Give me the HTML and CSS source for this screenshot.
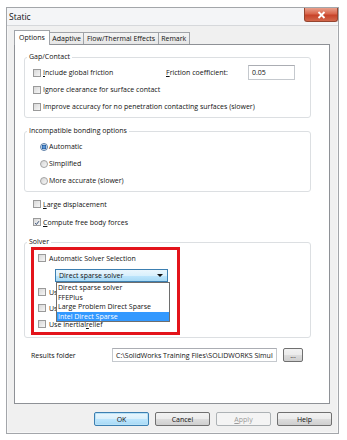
FILE: index.html
```html
<!DOCTYPE html>
<html lang="en">

<head>
    <meta charset="UTF-8" />
    <title>Static</title>
    <link rel="stylesheet" href="styles.css">
</head>

<body>
    <div class="window">
        <div class="titlebar">
            <span class="title">Static</span>
            <div class="close">
                <svg width="9" height="8" viewBox="0 0 9 8">
                    <path d="M1.5 1 L7.5 7 M7.5 1 L1.5 7" stroke="#fff" stroke-width="1.8" />
                </svg>
            </div>
        </div>

        <div class="body">
            <div class="tabs">
                <div class="tab active">Options</div>
                <div class="tab">Adaptive</div>
                <div class="tab">Flow/Thermal Effects</div>
                <div class="tab">Remark</div>
            </div>

            <div class="panel">
                <fieldset class="group gap">
                    <legend>Gap/Contact</legend>
                    <div class="row">
                        <span class="opt friction"><span class="check"></span><u>I</u>nclude global friction</span>
                        <span class="coef-label"><u>F</u>riction coefficient:</span>
                        <span class="textbox coef">0.05</span>
                    </div>
                    <div class="row">
                        <span class="opt"><span class="check"></span>I<u>g</u>nore clearance for surface contact</span>
                    </div>
                    <div class="row">
                        <span class="opt"><span class="check"></span>Improve accuracy for no penetration contacting surfaces (slower)</span>
                    </div>
                </fieldset>

                <fieldset class="group bonding">
                    <legend>Incompatible bonding options</legend>
                    <div class="row">
                        <span class="opt"><span class="radio selected"></span>Automatic</span>
                    </div>
                    <div class="row">
                        <span class="opt"><span class="radio"></span>Simplified</span>
                    </div>
                    <div class="row">
                        <span class="opt"><span class="radio"></span>More accurate (slower)</span>
                    </div>
                </fieldset>

                <div class="loose">
                    <div class="row tall">
                        <span class="opt"><span class="check"></span><u>L</u>arge displacement</span>
                    </div>
                    <div class="row tall">
                        <span class="opt">
                            <span class="check">
                                <svg width="8" height="8" viewBox="0 0 8 8">
                                    <polyline points="1.6,4.2 3.2,6 6.6,1.6" fill="none" stroke="#26416b" stroke-width="1.2" />
                                </svg>
                            </span><u>C</u>ompute free body forces
                        </span>
                    </div>
                </div>

                <fieldset class="group solver">
                    <legend>Solver</legend>
                    <div class="redbox">
                        <div class="srow">
                            <span class="opt"><span class="check"></span>Automatic Solver Selection</span>
                        </div>
                        <div class="combo">
                            <div class="combo-face">
                                <span>Direct sparse solver</span>
                                <span class="arrow"></span>
                            </div>
                            <div class="droplist">
                                <div class="item">Direct sparse solver</div>
                                <div class="item">FFEPlus</div>
                                <div class="item">Large Problem Direct Sparse</div>
                                <div class="item picked">Intel Direct Sparse</div>
                            </div>
                        </div>
                        <div class="srow first-use">
                            <span class="opt"><span class="check"></span>Use inplane effect</span>
                        </div>
                        <div class="srow">
                            <span class="opt"><span class="check"></span>Use soft spring to stabilize model</span>
                        </div>
                        <div class="srow">
                            <span class="opt"><span class="check"></span>Use inertial <u>r</u>elief</span>
                        </div>
                    </div>
                </fieldset>

                <div class="results">
                    <span class="results-label">Results folder</span>
                    <span class="textbox path">C:\SolidWorks Training Files\SOLIDWORKS Simul</span>
                    <span class="btn browse">...</span>
                </div>
            </div>

            <div class="buttons">
                <span class="btn default">OK</span>
                <span class="btn">Cancel</span>
                <span class="btn disabled"><u>A</u>pply</span>
                <span class="btn">Help</span>
            </div>
        </div>
    </div>
</body>

</html>
```

FILE: styles.css
```css
body {
    margin: 0;
    background: #ffffff;
    font-family: 'Open Sans', 'Noto Sans', sans-serif;
    font-size: 7px;
    color: #111;
}

u {
    text-decoration-thickness: 1px;
    text-underline-offset: 1px;
}

.window {
    margin: 7px 0 0 6px;
    width: 333px;
    height: 427px;
    box-sizing: border-box;
    border: 1px solid #a3a6aa;
    box-shadow: inset 0 0 0 1px #f7f7f7;
    background: #f0f0f0;
}

.titlebar {
    height: 17px;
    display: flex;
    justify-content: space-between;
    align-items: center;
    padding-left: 2px;
    background: #f4f5f7;
    border-bottom: 1px solid #d6d8db;
}

.title {
    font-size: 8.5px;
    color: #111;
}

.close {
    align-self: flex-start;
    width: 34px;
    height: 14px;
    box-sizing: border-box;
    border: 1px solid #95452f;
    border-top: none;
    border-radius: 0 0 3px 3px;
    background: linear-gradient(#e9a08c, #d9664c 45%, #c7432a 55%, #d2674b);
    display: flex;
    align-items: center;
    justify-content: center;
}

.body {
    padding: 4px 8px 0 7px;
}

/* tabs */
.tabs {
    display: flex;
    align-items: flex-end;
    height: 14px;
}

.tab {
    height: 12px;
    box-sizing: border-box;
    padding: 0 2.5px;
    margin-right: -1px;
    border: 1px solid #a0a3a8;
    border-bottom: none;
    background: linear-gradient(#f4f4f4, #e6e6e6);
    line-height: 11px;
}

.tab.active {
    height: 15px;
    margin-bottom: -1px;
    padding: 1px 4px 0;
    background: #ffffff;
    position: relative;
    z-index: 1;
}

.panel {
    height: 360px;
    box-sizing: border-box;
    border: 1px solid #8e9196;
    background: #ffffff;
    padding-top: 7px;
}

/* group boxes */
.group {
    margin: 0 18px 0 9px;
    padding: 2px 0 2px 2px;
    border: 1px solid #dcdfe2;
    border-radius: 3px;
    min-width: 0;
}

.group legend {
    padding: 0 2px;
    line-height: 10px;
}

.bonding {
    margin-top: 8px;
}

.solver {
    margin-top: 6px;
    padding-top: 0;
}

.row {
    height: 17px;
    display: flex;
    align-items: center;
    padding-left: 6px;
}

.bonding .row {
    padding-left: 13px;
}

.loose {
    margin-top: 3px;
}

.row.tall {
    height: 18px;
    padding-left: 18px;
}

.opt {
    display: flex;
    align-items: center;
    white-space: nowrap;
}

.friction {
    width: 133px;
}

.coef-label {
    width: 82px;
}

.check {
    width: 8px;
    height: 8px;
    box-sizing: border-box;
    margin-right: 2px;
    border: 1px solid #9a9a9a;
    background: linear-gradient(135deg, #d8d8d8, #f6f6f6);
    display: flex;
}

.radio {
    width: 8px;
    height: 8px;
    box-sizing: border-box;
    margin-right: 1px;
    border: 1px solid #a2a2a2;
    border-radius: 50%;
    background: linear-gradient(135deg, #d6d6d6, #f8f8f8);
}

.radio.selected {
    border-color: #5c7ea6;
    background: radial-gradient(circle, #7cb4ee 0, #1f5a9e 2.2px, #e4eef8 2.6px);
}

.textbox {
    height: 15px;
    box-sizing: border-box;
    border: 1px solid #c5c9ce;
    border-top-color: #abadb3;
    padding: 2px 3px 0;
    background: #ffffff;
    white-space: nowrap;
    overflow: hidden;
}

.coef {
    width: 47px;
}

/* solver area */
.redbox {
    margin-left: 4px;
    width: 149px;
    box-sizing: border-box;
    border: 3px solid #e3141b;
    padding-left: 4px;
}

.srow {
    height: 16px;
    display: flex;
    align-items: center;
}

.srow .check {
    margin-right: 3px;
}

.first-use {
    margin-top: 2px;
}

.combo {
    position: relative;
    margin: 3px 0 0 17px;
    width: 113px;
    height: 13px;
}

.combo-face {
    height: 13px;
    box-sizing: border-box;
    border: 1px solid #3c7fb1;
    background: linear-gradient(#eaf6fd, #d9f0fc 50%, #bee6fd 51%, #a7d9f5);
    display: flex;
    align-items: center;
    justify-content: space-between;
    padding: 0 4px 0 3px;
}

.arrow {
    width: 0;
    height: 0;
    border-left: 3px solid transparent;
    border-right: 3px solid transparent;
    border-top: 3px solid #111;
}

.droplist {
    position: absolute;
    top: 13px;
    left: 1px;
    width: 114px;
    box-sizing: border-box;
    border: 1px solid #6e6e6e;
    background: #ffffff;
    z-index: 2;
}

.item {
    height: 9.5px;
    line-height: 9.5px;
    padding-left: 1px;
    white-space: nowrap;
}

.item.picked {
    background: #3399ff;
    color: #ffffff;
}

/* results folder */
.results {
    margin: 10px 0 0 16px;
    height: 14px;
    display: flex;
    align-items: center;
}

.results-label {
    width: 81px;
}

.path {
    width: 165px;
    height: 14px;
}

.btn {
    height: 14px;
    box-sizing: border-box;
    border: 1px solid #707070;
    border-radius: 2px;
    background: linear-gradient(#f2f2f2, #ebebeb 50%, #dddddd 51%, #cfcfcf);
    display: flex;
    align-items: center;
    justify-content: center;
}

.browse {
    width: 20px;
    margin-left: 6px;
    line-height: 1;
}

/* dialog buttons */
.buttons {
    margin: 8px -2px 0 0;
    display: flex;
    justify-content: flex-end;
    gap: 6px;
}

.buttons .btn {
    width: 55px;
}

.btn.default {
    border-color: #3c7fb1;
    background: linear-gradient(#eaf6fd, #d9f0fc 50%, #bee6fd 51%, #a7d9f5);
    box-shadow: inset 0 0 0 1px #b9e2f7;
}

.btn.disabled {
    border-color: #adb2b5;
    background: #f4f4f4;
    color: #9a9a9a;
}
```
